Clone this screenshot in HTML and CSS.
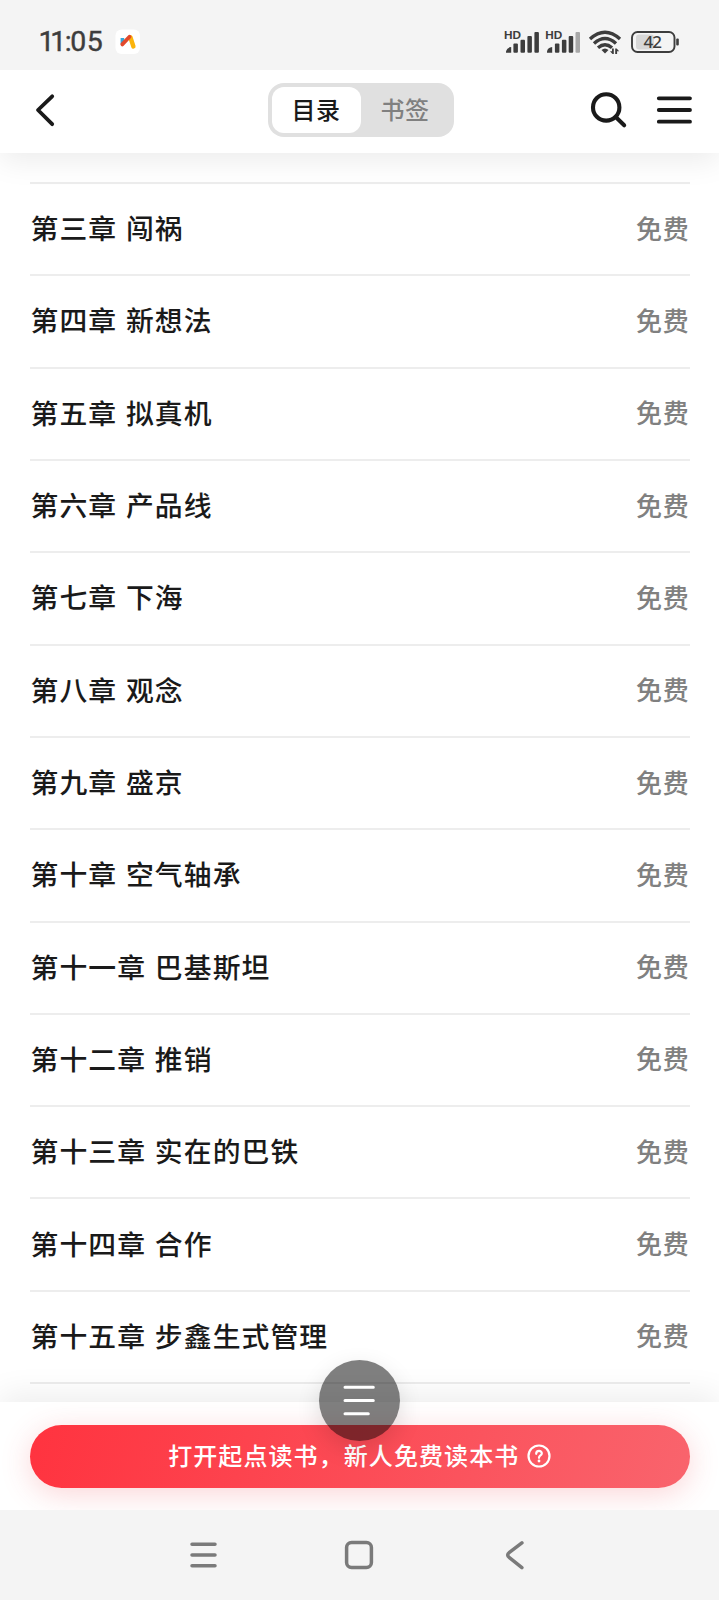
FILE: index.html
```html
<!DOCTYPE html>
<html lang="zh-CN">
<head>
<meta charset="utf-8">
<title>目录</title>
<link rel="stylesheet" href="styles.css">
</head>
<body>
<div class="screen">
  <div class="status">
    <div class="time"><span class="ones">11</span><span class="colon">:</span>05</div>
    <svg class="app" width="26" height="26" viewBox="0 0 26 26">
      <rect x="0.5" y="0.5" width="24.5" height="24.5" rx="6" fill="#fff"/>
      <path d="M7.400 9v6" stroke="#35a5d8" stroke-width="3.600" fill="none"/>
      <path d="M15.400 8.200l3 9.300" stroke="#fbb40c" stroke-width="4.400" stroke-linecap="round" fill="none"/>
      <path d="M7.300 15.400l7.200-7.600" stroke="#e2492b" stroke-width="3.800" stroke-linecap="round" fill="none"/>
    </svg>
    <svg class="signals" width="180" height="30" viewBox="500 26 180 30">
      <g class="hd"><text x="504" y="39" textLength="17" lengthAdjust="spacingAndGlyphs">HD</text><text x="545.3" y="39" textLength="17" lengthAdjust="spacingAndGlyphs">HD</text></g>
      <g fill="#3d3d3d">
        <path d="M506 52.700v-1.500q1-3.800 5.200-4.200v5.700z"/>
        <rect x="513.400" y="43.500" width="4.500" height="9.200" rx="1"/><rect x="520.500" y="39.800" width="4.500" height="12.900" rx="1"/><rect x="527.400" y="36" width="4.500" height="16.700" rx="1"/><rect x="534.400" y="32" width="4.500" height="20.700" rx="1"/>
        <path d="M547 52.700v-1.500q1-3.800 5.200-4.200v5.700z"/>
        <rect x="554.900" y="43.500" width="4.500" height="9.200" rx="1"/><rect x="561.900" y="39.800" width="4.500" height="12.900" rx="1"/><rect x="568.700" y="36" width="4.500" height="16.700" rx="1"/><rect x="575.500" y="32" width="4.500" height="20.700" rx="1" opacity=".42"/>
        <path d="M605 53.500l-3.500-3.600q3.500-3 7 0z"/>
        <path d="M612 48.500h1.800v5.500h-1.300l-2.500-2.800h2zM615.200 54v-5.500h1.400l2.600 2.800h-2.100v2.700z"/>
      </g>
      <g fill="none" stroke="#3d3d3d" stroke-width="3.400">
        <path d="M590 39q15-13.500 30 0"/><path d="M594 43.500q11-10 22 0"/><path d="M598 47.700q7-6 14 0"/>
      </g>
      <rect x="636" y="34.500" width="18" height="15" rx="3" fill="#d7d7d7"/>
      <rect x="632" y="32" width="42.500" height="20" rx="5.500" fill="none" stroke="#3d3d3d" stroke-width="1.900"/>
      <rect x="676.200" y="38.500" width="2.600" height="7" rx="1" fill="#3d3d3d"/>
      <text class="battery" x="643.500" y="48" textLength="18.500">42</text>
    </svg>
  </div>

  <div class="header">
    <svg class="back" width="24" height="36" viewBox="34 92 24 36"><path d="M52.200 96.300L38 110l14.200 14.200" fill="none" stroke="#1a1a1a" stroke-width="3.800" stroke-linecap="round" stroke-linejoin="round"/></svg>
    <div class="tabs"><div class="tab on">目录</div><div class="tab">书签</div></div>
    <svg class="tools" width="106" height="40" viewBox="588 90 106 40" fill="none" stroke="#1a1a1a" stroke-linecap="round">
      <circle cx="606.200" cy="107.400" r="13.200" stroke-width="4.100"/><path d="M616 117.300l8.200 8" stroke-width="4"/>
      <path d="M658.800 98.300h31.200M658.800 110h31.200M658.800 121.700h31.200" stroke-width="3.800"/>
    </svg>
  </div>

  <div class="list">
    <div class="row"><span>第三章 闯祸</span><span class="free">免费</span></div>
    <div class="row"><span>第四章 新想法</span><span class="free">免费</span></div>
    <div class="row"><span>第五章 拟真机</span><span class="free">免费</span></div>
    <div class="row"><span>第六章 产品线</span><span class="free">免费</span></div>
    <div class="row"><span>第七章 下海</span><span class="free">免费</span></div>
    <div class="row"><span>第八章 观念</span><span class="free">免费</span></div>
    <div class="row"><span>第九章 盛京</span><span class="free">免费</span></div>
    <div class="row"><span>第十章 空气轴承</span><span class="free">免费</span></div>
    <div class="row"><span>第十一章 巴基斯坦</span><span class="free">免费</span></div>
    <div class="row"><span>第十二章 推销</span><span class="free">免费</span></div>
    <div class="row"><span>第十三章 实在的巴铁</span><span class="free">免费</span></div>
    <div class="row"><span>第十四章 合作</span><span class="free">免费</span></div>
    <div class="row"><span>第十五章 步鑫生式管理</span><span class="free">免费</span></div>
  </div>

  <div class="bottom">
    <div class="cta">
      <span>打开起点读书，新人免费读本书</span>
      <svg width="24" height="24" viewBox="0 0 24 24" fill="none" stroke="#fff" stroke-width="2.200">
        <circle cx="12" cy="12" r="10.500"/><path d="M9.200 9.800c0-4 5.800-3.700 5.600-.3-.1 2-2.800 2-2.800 4.300" stroke-linecap="round"/><circle cx="12" cy="17" r="1.400" fill="#fff" stroke="none"/>
      </svg>
    </div>
    <div class="fab">
      <svg width="81" height="81" viewBox="0 0 81 81"><path d="M26 27.200h28.300M26 40.500h28.300M26 53.800h23.300" stroke="#fff" stroke-width="3" stroke-linecap="round"/></svg>
    </div>
  </div>

  <div class="nav">
    <svg width="30" height="30" viewBox="0 0 30 30"><path d="M4 4.300h23M4 15h23M4 25.700h23"/></svg>
    <svg width="30" height="30" viewBox="0 0 30 30"><rect x="2.600" y="2.600" width="24.800" height="24.800" rx="5"/></svg>
    <svg width="30" height="30" viewBox="0 0 30 30"><path d="M22.900 2.800L10.400 12.300Q6.900 15 10.400 17.700L22.900 27.600"/></svg>
  </div>
</div>
</body>
</html>
```
FILE: styles.css
```css
* { box-sizing: border-box; }

body {
  margin: 0;
  background: #fff;
  color: #1a1a1a;
  font-family: "Noto Sans CJK SC", sans-serif;
  font-weight: 500;
}

svg { display: block; flex: none; }

.screen {
  display: flex;
  flex-direction: column;
  width: 719px;
  height: 1600px;
  overflow: hidden;
}

.status {
  position: relative;
  z-index: 1;
  display: flex;
  flex: none;
  height: 69.5px;
  padding: 26px 39px 0 40px;
  background: #f4f4f4;
}

.time {
  width: 74px;
  height: 32px;
  font: 400 28.500px/31px Roboto, sans-serif;
  letter-spacing: 0.300px;
  color: #3d3d3d;
  white-space: nowrap;
  -webkit-text-stroke: 0.400px;
}

.ones { letter-spacing: -4.200px; margin-left: -1.500px; }
.colon { margin: 0 -1.500px 0 2.500px; }

.app { margin: 2.500px 0 0 1px; }
.signals { margin-left: auto; }

.hd { font: 700 11.500px "Liberation Sans", sans-serif; fill: #3d3d3d; }
.battery { font: 500 17px "Noto Sans", sans-serif; fill: #3d3d3d; }

.header {
  position: relative;
  display: flex;
  flex: none;
  align-items: center;
  justify-content: space-between;
  height: 83.500px;
  padding: 0 25px 2px 34px;
  background: #fff;
  box-shadow: 0 8px 30px rgba(0, 0, 0, 0.08);
}

.tabs {
  display: flex;
  width: 186px;
  height: 54px;
  margin-left: 75px;
  padding: 4px;
  border-radius: 16px;
  background: #e0e0e0;
}

.tab {
  flex: 1;
  border-radius: 12px;
  color: #808080;
  font-size: 24px;
  line-height: 43px;
  letter-spacing: 0.500px;
  text-align: center;
}

.tab.on { background: #fff; color: #1a1a1a; }

.list {
  flex: none;
  height: 1249px;
  padding: 29px 29.500px 0 30px;
}

.row {
  display: flex;
  align-items: center;
  justify-content: space-between;
  height: 92.320px;
  padding-bottom: 4px;
  border-top: 2px solid #ededed;
  font-size: 27.800px;
  letter-spacing: 1.100px;
  word-spacing: 1.400px;
  white-space: nowrap;
}

.row span:first-child { padding-left: 0.500px; }

.row:last-child { height: 94.320px; border-bottom: 2px solid #ededed; }

.row .free { color: #808080; font-size: 26px; letter-spacing: 0.800px; }

.bottom {
  position: relative;
  flex: none;
  height: 108px;
  padding: 23px 29.500px 0 30px;
  background: #fff;
  box-shadow: 0 -8px 30px rgba(0, 0, 0, 0.07);
}

.cta {
  display: flex;
  align-items: center;
  justify-content: center;
  gap: 8px;
  height: 63px;
  padding-bottom: 2px;
  border-radius: 32px;
  background: linear-gradient(105deg, #ff333f, #f9646d);
  box-shadow: 0 6px 30px rgba(237, 66, 75, 0.22);
  color: #fff;
  font-size: 24px;
  letter-spacing: 1.080px;
}

.cta span { margin-top: -2px; }

/* Floating shortcut over the edge of the bottom bar */
.fab {
  position: absolute;
  left: 319px;
  top: -42px;
  width: 81px;
  height: 81px;
  border-radius: 50%;
  background: rgba(0, 0, 0, 0.5);
  box-shadow: 0 8px 24px rgba(0, 0, 0, 0.12);
}

.nav {
  position: relative;
  display: flex;
  flex: none;
  justify-content: center;
  gap: 125.500px;
  height: 90px;
  padding: 29.500px 1.200px 0 0;
  background: #f4f4f4;
}

.nav svg {
  fill: none;
  stroke: #7a7a7a;
  stroke-width: 3.500px;
  stroke-linecap: round;
}
```
